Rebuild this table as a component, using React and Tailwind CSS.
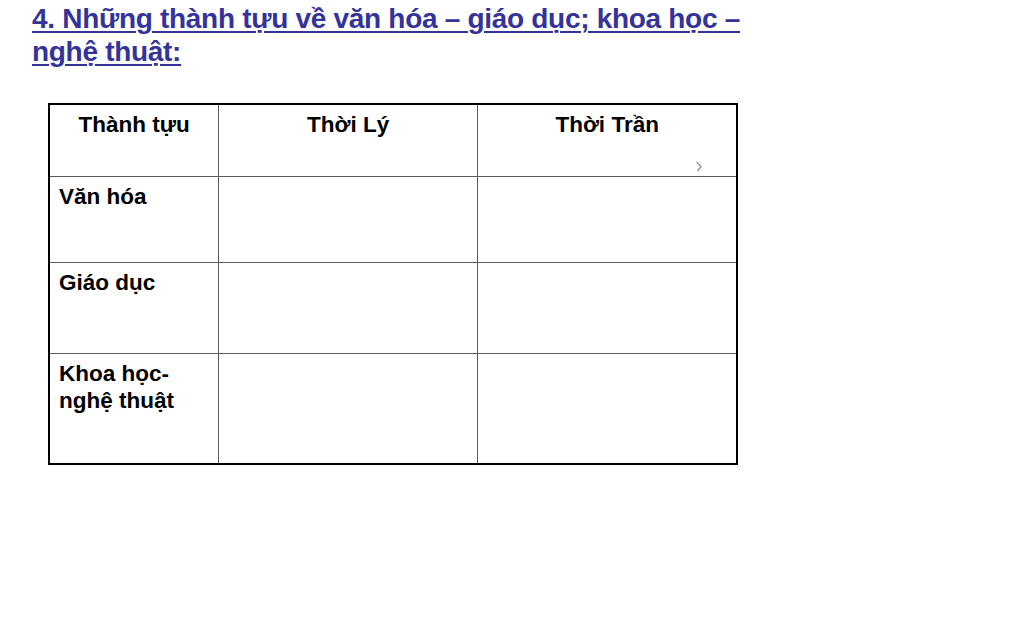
export default function App() {
  const cell = "border-[1.5px] border-[#5a5a5a] align-top px-[9px] pt-[6px] text-[22.5px] leading-[27px] font-bold text-black";
  return (
    <div className="w-[1024px] h-[628px] bg-white overflow-hidden relative" style={{ fontFamily: '"Liberation Sans", Arial, sans-serif' }}>
      <div className="pl-[32px] pt-[2px] w-[760px]">
        <h1 className="text-[28px] leading-[33px] font-bold text-[#333399] underline underline-offset-[3px] decoration-2 tracking-[-0.3px]" style={{ fontFamily: '"Liberation Sans Narrow", "Arial Narrow", "Liberation Sans", sans-serif' }}>
          4. Những thành tựu về văn hóa – giáo dục; khoa học –<br />nghệ thuật:
        </h1>
      </div>
      <div className="pl-[48px] pt-[35px]">
        <table className="border-collapse border-2 border-black w-[690px]">
          <tbody>
            <tr className="h-[72px]">
              <td className={cell + " w-[170px] text-center"}>Thành tựu</td>
              <td className={cell + " w-[260px] text-center"}>Thời Lý</td>
              <td className={cell + " w-[260px] text-center relative"}>
                Thời Trần
                <svg className="absolute right-[33px] bottom-[4px]" width="8" height="11" viewBox="0 0 8 11">
                  <path d="M1.5 1 L6 5.5 L2.5 10" fill="none" stroke="#9a9a9a" strokeWidth="1.5" />
                </svg>
              </td>
            </tr>
            <tr className="h-[86px]">
              <td className={cell}>Văn hóa</td>
              <td className={cell}></td>
              <td className={cell}></td>
            </tr>
            <tr className="h-[91px]">
              <td className={cell}>Giáo dục</td>
              <td className={cell}></td>
              <td className={cell}></td>
            </tr>
            <tr className="h-[111px]">
              <td className={cell}>Khoa học-<br />nghệ thuật</td>
              <td className={cell}></td>
              <td className={cell}></td>
            </tr>
          </tbody>
        </table>
      </div>
    </div>
  );
}
